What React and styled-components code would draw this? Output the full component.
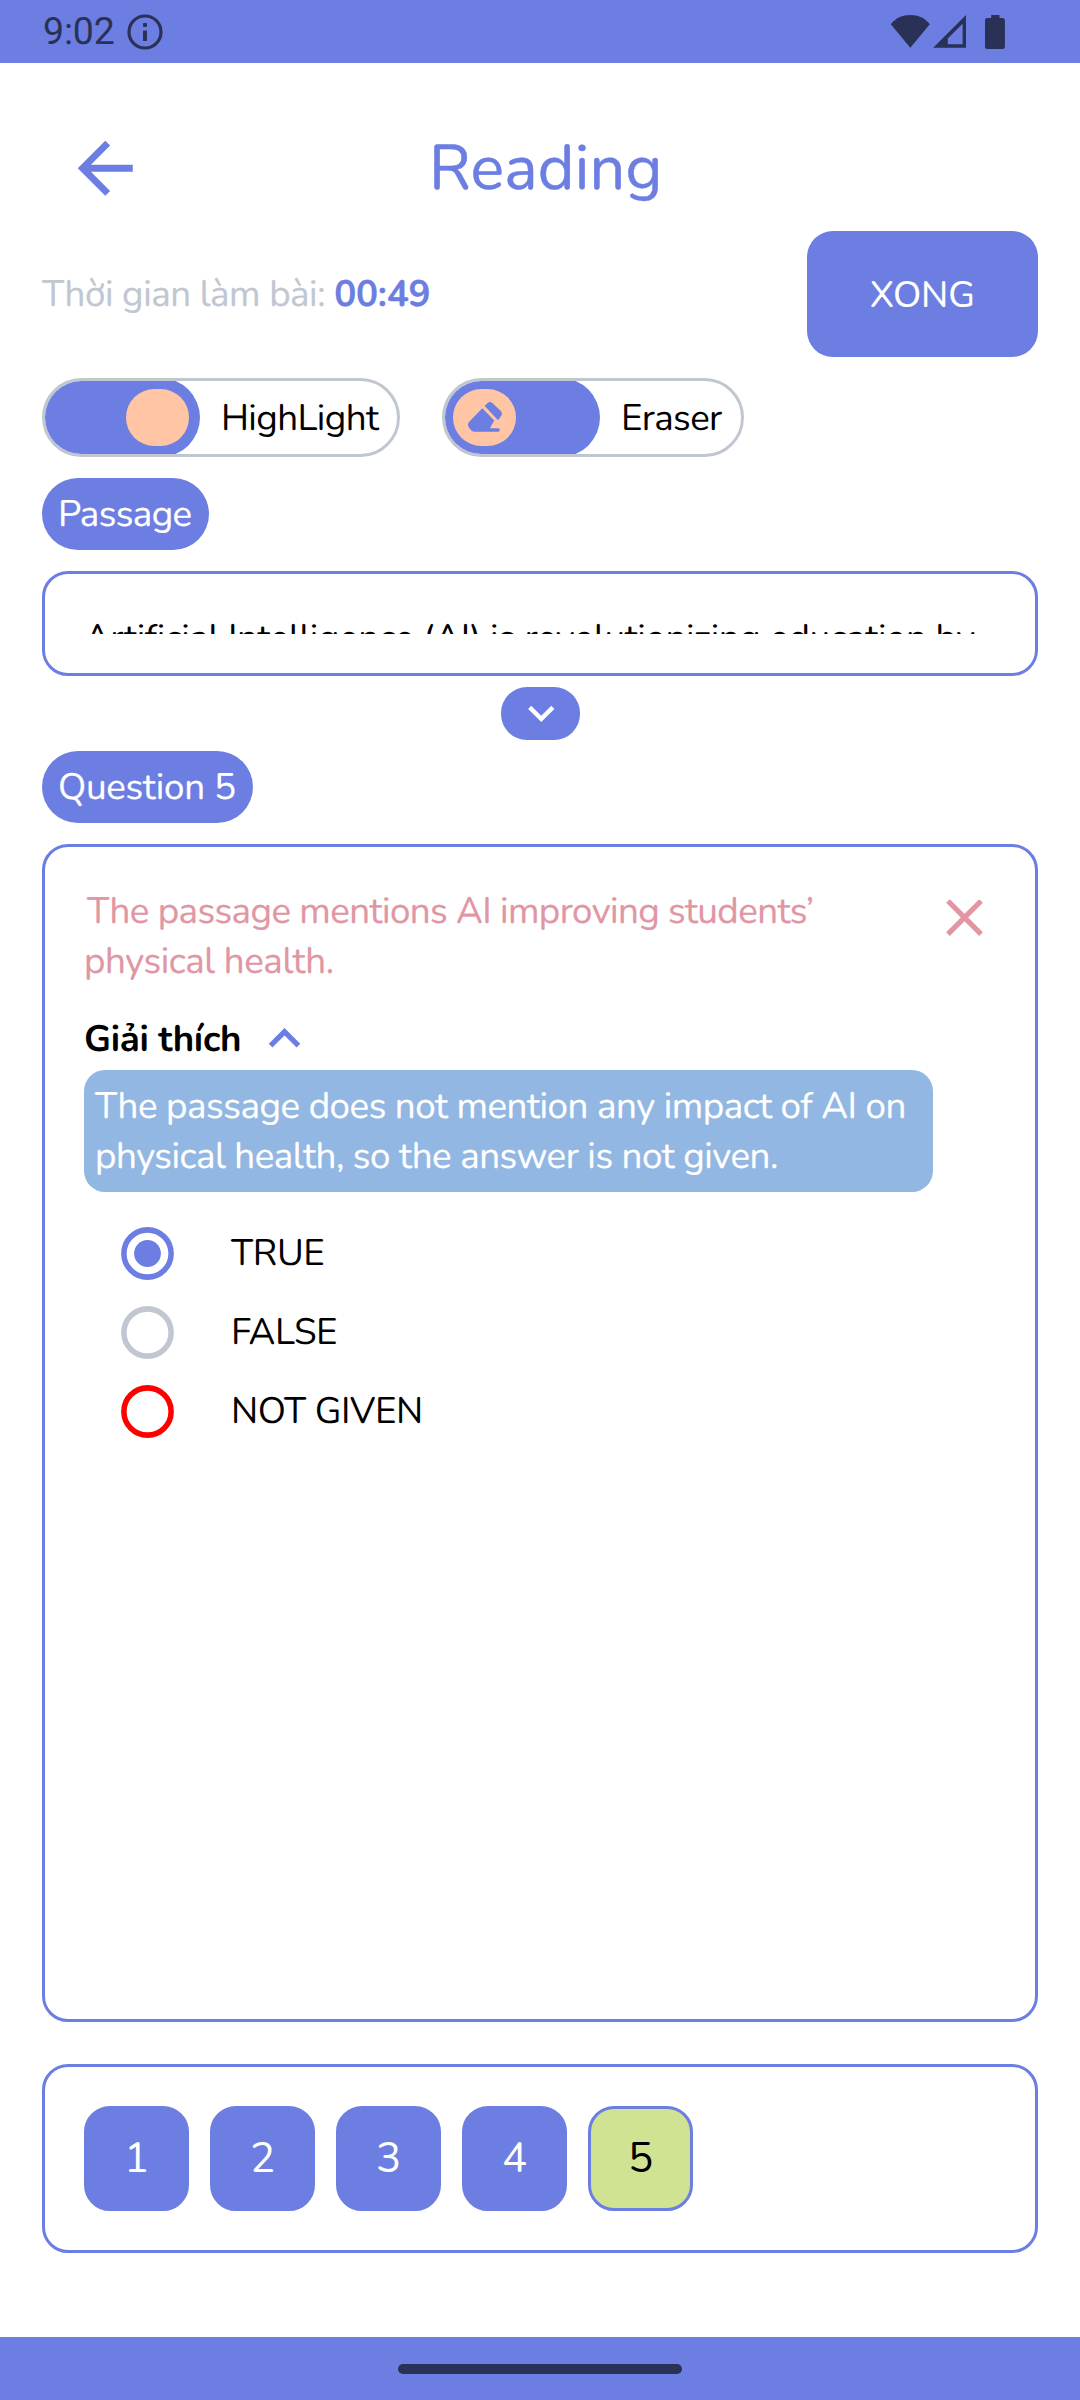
import React from "react";
import styled, { createGlobalStyle, css } from "styled-components";

const blue = "#6C7EE1";
const ink = "#2A3157";
const gray = "#C1C7D1";
const peach = "#FFC5A5";
const rose = "#E196A4";

const GlobalStyle = createGlobalStyle`
  * { box-sizing: border-box; }
  body {
    margin: 0;
    background: #fff;
    font-family: Nunito, Lato, "Noto Sans", sans-serif;
    font-size: 36.75px;
    line-height: 50px;
    letter-spacing: -0.5px;
    color: #000;
    text-rendering: geometricPrecision;
  }
  button { font: inherit; color: inherit; letter-spacing: 0; border: 0; padding: 0; background: none; }
  svg { display: block; flex: none; }
`;

const softStroke = css`
  -webkit-text-stroke: 0.2px currentColor;
`;

const Screen = styled.div`
  width: 1080px;
  height: 2400px;
  display: flex;
  flex-direction: column;
`;

const StatusBar = styled.div`
  height: 63px;
  padding: 0 74px 0 43px;
  background: ${blue};
  color: ${ink};
  display: flex;
  align-items: center;
  justify-content: space-between;
`;
const StatusGroup = styled.div`
  display: flex;
  align-items: center;
`;
const Clock = styled.span`
  width: 83.5px;
  padding-top: 1px;
  font-family: Roboto, sans-serif;
  font-size: 37.5px;
  letter-spacing: -0.2px;
`;

const Header = styled.header`
  height: 126px;
  margin-top: 42px;
  padding: 1px 135px 0 64px;
  display: flex;
  align-items: center;
  color: ${blue};
`;
const Title = styled.h1`
  flex: 1;
  margin: 0;
  font-size: 63px;
  font-weight: 400;
  line-height: 86px;
  letter-spacing: 0.15px;
  text-align: center;
  -webkit-text-stroke: 0.5px currentColor;
`;

const Body = styled.main`
  flex: 1;
  padding: 0 42px;
  display: flex;
  flex-direction: column;
  align-items: flex-start;
`;

const TimerRow = styled.div`
  width: 100%;
  height: 126px;
  display: flex;
  align-items: center;
  justify-content: space-between;
`;
const TimerLabel = styled.div`
  ${softStroke}
  color: ${gray};
  letter-spacing: -0.46px;
  white-space: pre;
  b { color: ${blue}; font-weight: 700; letter-spacing: -0.2px; }
`;
const DoneButton = styled.button`
  ${softStroke}
  width: 231px;
  height: 126px;
  padding-top: 1px;
  border-radius: 26px;
  background: ${blue};
  color: #fff;
`;

const ToggleRow = styled.div`
  display: flex;
  gap: 42px;
  margin-top: 21px;
`;
const Toggle = styled.div`
  height: 79px;
  width: ${(p) => p.$width}px;
  border: 3px solid ${gray};
  border-radius: 40px;
  overflow: hidden;
  display: flex;
  align-items: center;
  gap: 21px;
  letter-spacing: -0.6px;
`;
const Track = styled.div`
  flex: none;
  width: 158px;
  height: 79px;
  margin: -3px 0 -3px -3px;
  padding: 0 11px;
  border-radius: 40px;
  background: ${blue};
  display: flex;
  align-items: center;
  justify-content: ${(p) => (p.$on ? "flex-end" : "flex-start")};
`;
const Thumb = styled.div`
  width: 63px;
  height: 57px;
  border-radius: 28.5px;
  background: ${peach};
`;

const Pill = styled.div`
  ${softStroke}
  height: 72px;
  margin-top: ${(p) => p.$gap}px;
  padding: 11px 17px 11px 16px;
  border-radius: 36px;
  background: ${blue};
  color: #fff;
  letter-spacing: ${(p) => p.$tracking}px;
`;

const panel = css`
  width: 100%;
  border: 3px solid ${blue};
  border-radius: 26px;
  padding: 39px;
`;
const PassagePanel = styled.section`
  ${panel}
  height: 105px;
  margin-top: 21px;
`;
const PassageText = styled.div`
  height: 21px;
  overflow: hidden;
  white-space: nowrap;
  letter-spacing: -0.42px;
`;
const ExpandButton = styled.button`
  align-self: center;
  width: 79px;
  height: 53px;
  margin: 11px 0 0 1px;
  padding-left: 1px;
  border-radius: 26px;
  background: ${blue};
  color: #fff;
  display: flex;
  align-items: center;
  justify-content: center;
`;

const QuestionPanel = styled.section`
  ${panel}
  height: 1178px;
  margin-top: 21px;
  display: flex;
  align-items: flex-start;
  color: ${rose};
`;
const QuestionContent = styled.div`
  width: 849px;
  color: #000;
`;
const QuestionText = styled.p`
  ${softStroke}
  margin: 0;
  color: ${rose};
  text-indent: 3px;
  letter-spacing: -0.42px;
  &::first-line { letter-spacing: -0.58px; }
`;
const ExplainToggle = styled.div`
  height: 63px;
  margin-top: 21px;
  display: flex;
  align-items: center;
  gap: 12px;
  font-weight: 700;
  letter-spacing: -0.3px;
  svg { color: ${blue}; }
`;
const Explanation = styled.p`
  ${softStroke}
  margin: 0;
  padding: 11px;
  border-radius: 21px;
  background: #92B7E3;
  color: #fff;
  letter-spacing: -0.47px;
  white-space: nowrap;
`;
const Options = styled.div`
  margin-top: 22px;
  padding-left: 32px;
`;
const Option = styled.div`
  height: 79px;
  display: flex;
  align-items: center;
  gap: 52px;
  letter-spacing: -0.4px;
`;
const OptionLabel = styled.span`
  padding-bottom: 2px;
`;

const NavPanel = styled.nav`
  ${panel}
  height: 189px;
  margin-top: 42px;
  display: flex;
  gap: 21px;
`;
const NavButton = styled.button`
  width: 105px;
  height: 105px;
  border: 3px solid ${blue};
  border-radius: 26px;
  font-size: 42px;
  background: ${(p) => (p.$current ? "#D0E392" : blue)};
  color: ${(p) => (p.$current ? "#000" : "#fff")};
`;

const SystemBar = styled.div`
  height: 63px;
  background: ${blue};
  display: flex;
  align-items: center;
  justify-content: center;
`;
const HomeHandle = styled.div`
  width: 284px;
  height: 10px;
  margin-bottom: -1px;
  border-radius: 5px;
  background: ${ink};
`;

const Icon = ({ size, d }) => (
  <svg width={size} height={size} viewBox="0 0 24 24" fill="currentColor">
    <path d={d} />
  </svg>
);
const ARROW_BACK = "M20 11H7.83l5.59-5.59L12 4l-8 8 8 8 1.41-1.41L7.83 13H20v-2z";
const CHEVRON_DOWN = "M7.41 8.59L12 13.17l4.59-4.58L18 10l-6 6-6-6 1.41-1.41z";
const CHEVRON_UP = "M12 8l-6 6 1.41 1.41L12 10.83l4.59 4.58L18 14z";
const CLOSE = "M19 6.41L17.59 5 12 10.59 6.41 5 5 6.41 10.59 12 5 17.59 6.41 19 12 13.41 17.59 19 19 17.59 13.41 12z";

const InfoIcon = () => (
  <svg width="36" height="36" viewBox="0 0 36 36" fill="currentColor">
    <circle cx="18" cy="18" r="16" fill="none" stroke="currentColor" strokeWidth="3.2" />
    <rect x="16" y="9" width="4" height="4" rx="1" />
    <rect x="16" y="16.5" width="4" height="10.5" rx=".6" />
  </svg>
);
const StatusIcons = () => (
  <svg width="116" height="36" viewBox="0 0 116 36" fill="currentColor">
    <path d="M.8 10.3C5.500 4 12.500 1 20.300 1S35 4 39.800 10.300L20.300 33.800z" />
    <path fillRule="evenodd" d="M43.200 33.800L76 1V33.800zM57.800 30.300H72.600V9.800L57.800 24.500z" />
    <path d="M101.200 1h8.300v3h3.200q2.200 0 2.200 2.200v26.500q0 2.200-2.200 2.200H97.200q-2.200 0-2.200-2.200V6.200Q95 4 97.200 4h4z" />
  </svg>
);
const EraserIcon = () => (
  <svg width="63" height="57" viewBox="39 41 189 172" fill={blue}>
    <path d="M127 99L163 136L151 157.500V159.500H174Q180 160.500 180 164.500Q180 169.500 174 170H104Q98 170 94 166L87 158Q80 148 88 139z" />
    <path d="M134 92L143 83Q150 77 157 83L182 107Q189 115 184 122L174.500 135z" />
  </svg>
);
const RadioIcon = ({ color, checked }) => (
  <svg width="63" height="63" viewBox="0 0 24 24">
    <circle cx="12" cy="12" r="9" fill="none" stroke={color} strokeWidth="2.1" />
    {checked && <circle cx="12" cy="12" r="5.100" fill={color} />}
  </svg>
);

const options = [
  { label: "TRUE", color: blue, checked: true },
  { label: "FALSE", color: gray },
  { label: "NOT GIVEN", color: "#FF0000" },
];

export default function App() {
  return (
    <Screen>
      <GlobalStyle />
      <StatusBar>
        <StatusGroup>
          <Clock>9:02</Clock>
          <InfoIcon />
        </StatusGroup>
        <StatusIcons />
      </StatusBar>
      <Header>
        <Icon size={82.5} d={ARROW_BACK} />
        <Title>Reading</Title>
      </Header>
      <Body>
        <TimerRow>
          <TimerLabel>Thời gian làm bài: <b>00:49</b></TimerLabel>
          <DoneButton>XONG</DoneButton>
        </TimerRow>
        <ToggleRow>
          <Toggle $width={358}>
            <Track $on><Thumb /></Track>
            HighLight
          </Toggle>
          <Toggle $width={302}>
            <Track><Thumb><EraserIcon /></Thumb></Track>
            Eraser
          </Toggle>
        </ToggleRow>
        <Pill $gap={21} $tracking={-0.6}>Passage</Pill>
        <PassagePanel>
          <PassageText>Artificial Intelligence (AI) is revolutionizing education by</PassageText>
        </PassagePanel>
        <ExpandButton><Icon size={52.5} d={CHEVRON_DOWN} /></ExpandButton>
        <Pill $gap={11} $tracking={-0.25}>Question 5</Pill>
        <QuestionPanel>
          <QuestionContent>
            <QuestionText>The passage mentions AI improving students’<br />physical health.</QuestionText>
            <ExplainToggle>
              Giải thích
              <Icon size={63} d={CHEVRON_UP} />
            </ExplainToggle>
            <Explanation>The passage does not mention any impact of AI on<br />physical health, so the answer is not given.</Explanation>
            <Options>
              {options.map((o) => (
                <Option key={o.label}>
                  <RadioIcon color={o.color} checked={o.checked} />
                  <OptionLabel>{o.label}</OptionLabel>
                </Option>
              ))}
            </Options>
          </QuestionContent>
          <Icon size={63} d={CLOSE} />
        </QuestionPanel>
        <NavPanel>
          {[1, 2, 3, 4, 5].map((n) => (
            <NavButton key={n} $current={n === 5}>{n}</NavButton>
          ))}
        </NavPanel>
      </Body>
      <SystemBar><HomeHandle /></SystemBar>
    </Screen>
  );
}
